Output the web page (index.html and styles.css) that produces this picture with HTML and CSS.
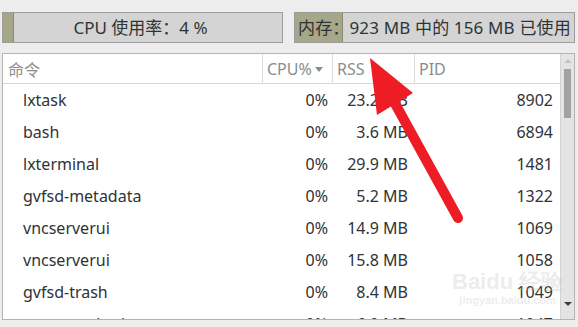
FILE: index.html
```html
<!DOCTYPE html>
<html lang="zh">
<head>
<meta charset="utf-8">
<link rel="stylesheet" href="styles.css">
</head>
<body>
<div class="app">
  <div class="meters">
    <div class="meter cpu">
      <div class="fill" style="width:11px"></div>
      <span class="label">CPU 使用率：4 %</span>
    </div>
    <div class="meter mem">
      <div class="fill" style="width:48px"></div>
      <span class="label">内存：923 MB 中的 156 MB 已使用</span>
    </div>
  </div>
  <div class="table">
    <div class="main">
      <div class="row head">
        <div class="c cmd">命令</div>
        <div class="c cpu">CPU%<span class="sort"></span></div>
        <div class="c rss">RSS</div>
        <div class="c pid">PID</div>
      </div>
      <div class="row"><div class="c cmd">lxtask</div><div class="c cpu">0%</div><div class="c rss">23.2 MB</div><div class="c pid">8902</div></div>
      <div class="row"><div class="c cmd">bash</div><div class="c cpu">0%</div><div class="c rss">3.6 MB</div><div class="c pid">6894</div></div>
      <div class="row"><div class="c cmd">lxterminal</div><div class="c cpu">0%</div><div class="c rss">29.9 MB</div><div class="c pid">1481</div></div>
      <div class="row"><div class="c cmd">gvfsd-metadata</div><div class="c cpu">0%</div><div class="c rss">5.2 MB</div><div class="c pid">1322</div></div>
      <div class="row"><div class="c cmd">vncserverui</div><div class="c cpu">0%</div><div class="c rss">14.9 MB</div><div class="c pid">1069</div></div>
      <div class="row"><div class="c cmd">vncserverui</div><div class="c cpu">0%</div><div class="c rss">15.8 MB</div><div class="c pid">1058</div></div>
      <div class="row"><div class="c cmd">gvfsd-trash</div><div class="c cpu">0%</div><div class="c rss">8.4 MB</div><div class="c pid">1049</div></div>
      <div class="row"><div class="c cmd">menu-cached</div><div class="c cpu">0%</div><div class="c rss">6.0 MB</div><div class="c pid">1047</div></div>
    </div>
    <div class="scrollbar">
      <span class="up"></span>
      <span class="thumb"></span>
      <span class="track"></span>
      <span class="down"></span>
    </div>
  </div>
  <div class="watermark">
    <span class="wm1">Baidu 经验</span>
    <span class="wm2">jingyan.baidu.com</span>
  </div>
  <svg class="arrow" width="578" height="327" viewBox="0 0 578 327">
    <line x1="392" y1="98" x2="458" y2="218" stroke="#ee1c25" stroke-width="10" stroke-linecap="round"/>
    <polygon points="370,58 413,93 377,115" fill="#ee1c25"/>
  </svg>
</div>
</body>
</html>
```
FILE: styles.css
```css
* { box-sizing: border-box; }
html, body { margin: 0; padding: 0; }
body {
  width: 578px;
  height: 327px;
  overflow: hidden;
  background: #ededed;
  font-family: "Noto Sans", "Noto Sans CJK SC", sans-serif;
  font-size: 16px;
  color: #2e3436;
}
.app {
  position: relative;
  width: 578px;
  height: 327px;
  padding: 12px 3px 0 2px;
}
.meters {
  display: flex;
  gap: 11px;
  height: 31px;
}
.meter {
  position: relative;
  height: 31px;
  border: 1px solid #9c9c9c;
  background: #d4d4d4;
  display: flex;
  align-items: center;
}
.meter.cpu { width: 281px; justify-content: center; }
.meter.mem { width: 281px; padding-left: 3px; }
.meter .fill {
  position: absolute;
  left: 0; top: 0; bottom: 0;
  background: #a6a689;
  border-right: 1px solid #8d8c72;
}
.meter .label {
  position: relative;
  color: #2e3436;
  white-space: nowrap;
  line-height: 1;
  font-size: 17px;
}
.meter.mem .label { letter-spacing: 0.15px; }
.table {
  margin-top: 10px;
  height: 267px;
  border: 1px solid #b4b4b4;
  background: #fff;
  display: flex;
  overflow: hidden;
}
.main { flex: 1; overflow: hidden; }
.row {
  display: grid;
  grid-template-columns: 259px 70px 82px 1fr;
  height: 32px;
  align-items: center;
  white-space: nowrap;
}
.row.head {
  height: 30px;
  border-bottom: 1px solid #d8d8d8;
  color: #8a8d8f;
}
.row.head .c { height: 30px; display: flex; align-items: center; }
.row.head .c + .c { border-left: 1px solid #dcdcdc; }
.head .cmd { padding-left: 5px; }
.head .cpu, .head .rss, .head .pid { padding-left: 4px; text-align: left; }
.sort {
  display: inline-block;
  width: 0; height: 0;
  margin-left: 3px;
  border-left: 4px solid transparent;
  border-right: 4px solid transparent;
  border-top: 5px solid #8a8d8f;
}
.cmd { padding-left: 20px; }
.cpu { text-align: right; padding-right: 4px; }
.rss { text-align: right; padding-right: 6px; }
.pid { text-align: right; padding-right: 7px; }
.row:not(.head) { line-height: 32px; }
.scrollbar {
  width: 14px;
  background: #e4e4e4;
  border-left: 1px solid #d4d4d4;
  display: flex;
  flex-direction: column;
  align-items: center;
  padding-top: 5px;
}
.up {
  width: 0; height: 0;
  border-left: 4px solid transparent;
  border-right: 4px solid transparent;
  border-bottom: 4px solid #c4c4c4;
}
.thumb {
  margin-top: 6px;
  width: 7px;
  height: 49px;
  background: #a2a2a2;
}
.track { flex: 1; }
.down {
  width: 0; height: 0;
  margin-bottom: 13px;
  border-left: 4px solid transparent;
  border-right: 4px solid transparent;
  border-top: 4px solid #3a3a3a;
}
.watermark {
  position: absolute;
  left: 452px;
  top: 270px;
  display: flex;
  flex-direction: column;
  align-items: center;
  color: rgba(190,190,190,0.28);
  font-family: "Liberation Sans", sans-serif;
  font-weight: bold;
  pointer-events: none;
}
.wm1 { font-size: 22px; line-height: 24px; }
.wm2 { font-size: 11px; line-height: 12px; }
.arrow {
  position: absolute;
  left: 0; top: 0;
  pointer-events: none;
}
```
